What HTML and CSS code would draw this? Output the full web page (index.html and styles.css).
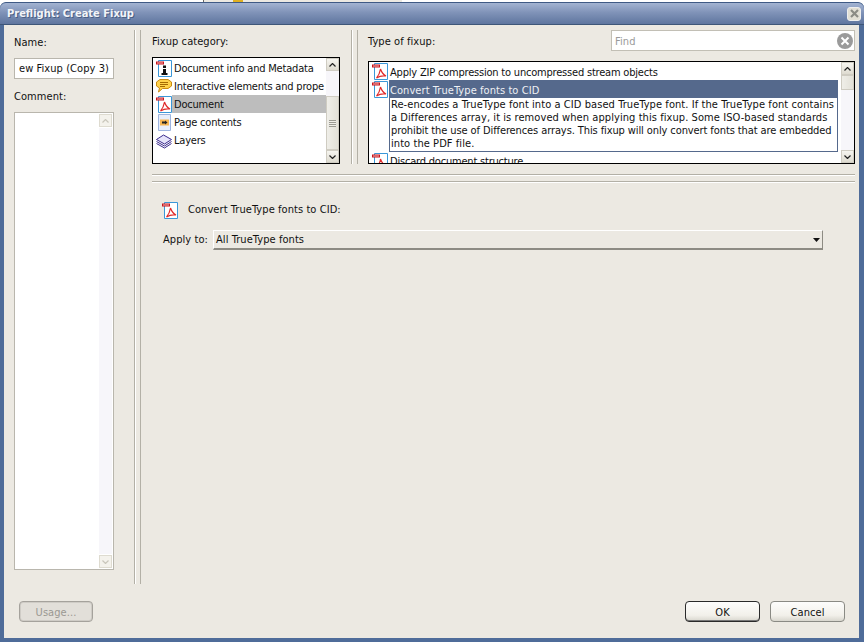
FILE: index.html
```html
<!DOCTYPE html>
<html lang="en">
<head>
<meta charset="utf-8">
<title>Preflight: Create Fixup</title>
<link rel="stylesheet" href="styles.css">
</head>
<body>
<svg class="defs" width="0" height="0" aria-hidden="true">
  <symbol id="pdf" viewBox="0 0 16 17">
    <path d="M2.5 .5H15.5V16.5H2.5Z" fill="#fff" stroke="#3a97d8"/>
    <path d="M0 1.500H8V4.500H0Z" fill="#c8141c"/>
    <path d="M1 2.500H7V3.500H1Z" fill="#f4b8b8"/>
    <path d="M8.500 6C9.500 9 11 11.500 14 13C11 12.500 7.500 13 4.500 15C6.500 12.500 8 9.500 8.500 6Z" fill="none" stroke="#e02a2a" stroke-width="1.200"/>
  </symbol>
  <symbol id="info" viewBox="0 0 16 17">
    <path d="M2.5 .5H15.5V16.5H2.5Z" fill="#fff" stroke="#3a97d8"/>
    <path d="M0 1.500H8V4.500H0Z" fill="#c8141c"/>
    <path d="M1 2.500H7V3.500H1Z" fill="#f4b8b8"/>
    <path d="M7 5.500H10V8H7ZM7 9H10V13H11.500V15H5.500V13H7Z" fill="#111"/>
  </symbol>
  <symbol id="bubble" viewBox="0 0 16 17">
    <path d="M4 1.500H12L15.500 4V8L12 10.500H6.500L2.500 14L3.500 10L.5 8V4Z" fill="#ffd24a" stroke="#c98a10"/>
    <path d="M4 4.500H12M4 6.500H12M4 8.500H9" stroke="#a56a00"/>
  </symbol>
  <symbol id="page" viewBox="0 0 16 17">
    <path d="M2.500 .5H14.500V16.500H2.500Z" fill="#e8eefa" stroke="#9db4df"/>
    <path d="M4 5.500H13V11.500H4Z" fill="#f6b552"/>
    <path d="M6 7.500H9V6.500L11.500 8.500L9 10.500V9.500H6Z" fill="#222"/>
  </symbol>
  <symbol id="layers" viewBox="0 0 16 17">
    <path d="M.5 7.500L7.500 3L15.500 7.500L8.500 12Z" fill="#e6e4fa" stroke="#3a2a8c"/>
    <path d="M.5 9.500L8.500 14L15.500 9.500M.5 11.500L8.500 16L15.500 11.500" fill="none" stroke="#3a2a8c"/>
  </symbol>
</svg>

<div class="backdrop">
  <span class="back-white"></span>
  <span class="back-grey"><i class="back-mark"></i></span>
</div>

<main class="dialog">
  <header class="titlebar">
    <h1 class="title">Preflight: Create Fixup</h1>
    <button class="close" type="button" aria-label="Close">
      <svg width="9" height="9" viewBox="0 0 9 9"><path d="M1 1L8 8M8 1L1 8" stroke="#8b8b84" stroke-width="2.200"/></svg>
    </button>
  </header>

  <div class="panel">
    <div class="workspace">
      <section class="left">
        <label class="label name-label">Name:</label>
        <div class="name-input">ew Fixup (Copy 3)</div>
        <label class="label comment-label">Comment:</label>
        <div class="comment">
          <div class="comment-fill"></div>
          <div class="scroll pale">
            <span class="sb-btn"><svg width="7" height="4" viewBox="0 0 7 4"><path d="M.5 3.500L3.500 .5L6.500 3.500" fill="none" stroke="#c9c6bb" stroke-width="1.200"/></svg></span>
            <span class="sb-track"></span>
            <span class="sb-btn"><svg width="7" height="4" viewBox="0 0 7 4"><path d="M.5 .5L3.500 3.500L6.500 .5" fill="none" stroke="#c9c6bb" stroke-width="1.200"/></svg></span>
          </div>
        </div>
      </section>

      <div class="vdiv tall"></div>

      <section class="right">
        <div class="top-row">
          <div class="category">
            <label class="label cat-label">Fixup category:</label>
            <div class="listbox cat-list">
              <ul class="rows">
                <li class="cat-row"><svg class="ico"><use href="#info"/></svg><span class="cat-text">Document info and Metadata</span></li>
                <li class="cat-row"><svg class="ico"><use href="#bubble"/></svg><span class="cat-text">Interactive elements and prope</span></li>
                <li class="cat-row"><svg class="ico"><use href="#pdf"/></svg><span class="cat-text picked">Document</span></li>
                <li class="cat-row"><svg class="ico"><use href="#page"/></svg><span class="cat-text">Page contents</span></li>
                <li class="cat-row"><svg class="ico"><use href="#layers"/></svg><span class="cat-text">Layers</span></li>
              </ul>
              <div class="scroll">
                <span class="sb-btn"><svg width="7" height="4" viewBox="0 0 7 4"><path d="M.5 3.500L3.500 .5L6.500 3.500" fill="none" stroke="#222" stroke-width="1.200"/></svg></span>
                <span class="sb-track cat-before"></span>
                <span class="sb-thumb cat-thumb"><i class="grip"></i></span>
                <span class="sb-btn"><svg width="7" height="4" viewBox="0 0 7 4"><path d="M.5 .5L3.500 3.500L6.500 .5" fill="none" stroke="#222" stroke-width="1.200"/></svg></span>
              </div>
            </div>
          </div>

          <div class="vdiv short"></div>

          <div class="types">
            <div class="types-head">
              <label class="label type-label">Type of fixup:</label>
              <div class="find">
                <span class="find-text">Find</span>
                <span class="find-clear">
                  <svg width="16" height="16" viewBox="0 0 16 16"><circle cx="8" cy="8" r="8" fill="#9a9a9a"/><path d="M4.500 4.500L11.500 11.500M11.500 4.500L4.500 11.500" stroke="#fff" stroke-width="2"/></svg>
                </span>
              </div>
            </div>
            <div class="listbox type-list">
              <div class="rows type-rows">
                <div class="type-row"><svg class="ico"><use href="#pdf"/></svg><span class="type-text tight">Apply ZIP compression to uncompressed stream objects</span></div>
                <div class="type-row"><svg class="ico"><use href="#pdf"/></svg><span class="type-text selected">Convert TrueType fonts to CID</span></div>
                <p class="desc"><span class="desc-line">Re-encodes a TrueType font into a CID based TrueType font. If the TrueType font contains</span><span class="desc-line">a Differences array, it is removed when applying this fixup. Some ISO-based standards</span><span class="desc-line squeezed">prohibit the use of Differences arrays. This fixup will only convert fonts that are embedded</span><span class="desc-line">into the PDF file.</span></p>
                <div class="type-row"><svg class="ico"><use href="#pdf"/></svg><span class="type-text tight">Discard document structure</span></div>
              </div>
              <div class="scroll">
                <span class="sb-btn"><svg width="7" height="4" viewBox="0 0 7 4"><path d="M.5 3.500L3.500 .5L6.500 3.500" fill="none" stroke="#222" stroke-width="1.200"/></svg></span>
                <span class="sb-thumb type-thumb"></span>
                <span class="sb-track"></span>
                <span class="sb-btn"><svg width="7" height="4" viewBox="0 0 7 4"><path d="M.5 .5L3.500 3.500L6.500 .5" fill="none" stroke="#222" stroke-width="1.200"/></svg></span>
              </div>
            </div>
          </div>
        </div>

        <div class="hrule first"></div>
        <div class="hrule second"></div>

        <div class="form">
          <div class="form-head">
            <svg class="ico"><use href="#pdf"/></svg>
            <span class="form-title">Convert TrueType fonts to CID:</span>
          </div>
          <div class="form-row">
            <label class="label apply-label">Apply to:</label>
            <div class="select">
              <span>All TrueType fonts</span>
              <svg width="7" height="4" viewBox="0 0 7 4"><path d="M0 0H7L3.500 4Z" fill="#111"/></svg>
            </div>
          </div>
        </div>
      </section>
    </div>

    <footer class="footer">
      <button class="btn disabled" type="button">Usage...</button>
      <div class="actions">
        <button class="btn primary" type="button">OK</button>
        <button class="btn" type="button">Cancel</button>
      </div>
    </footer>
  </div>
</main>
</body>
</html>
```

FILE: styles.css
```css
* { box-sizing: border-box; }
html, body { margin: 0; padding: 0; height: 642px; overflow: hidden; background: #fff; }
body {
  font-family: "DejaVu Sans Condensed", "DejaVu Sans", sans-serif;
  font-stretch: condensed;
  font-size: 11px;
  letter-spacing: 0.07px;
  color: #111;
  width: 864px;
}
.defs { position: absolute; }
button { font: inherit; letter-spacing: inherit; color: inherit; padding: 0; margin: 0; }
h1, p, ul { margin: 0; padding: 0; list-style: none; }

.backdrop { height: 2px; display: flex; background: #fff; }
.back-white { width: 203px; }
.back-grey { width: 199px; background: #ece9e2; border-left: 1px solid #666; padding-left: 29px; }
.back-mark { display: block; width: 10px; height: 2px; background: #e0b020; }

.dialog {
  height: 640px;
  display: flex;
  flex-direction: column;
  background: #4f6c99;
  border-radius: 6px 6px 0 0;
  border-top: 1px solid #3f5a85;
  padding: 0 5px 4px 4px;
}
.titlebar {
  height: 22px;
  margin: 0 -5px 0 -4px;
  padding: 0 3px 0 7px;
  border-bottom: 1px solid #3e5678;
  border-radius: 6px 6px 0 0;
  background: linear-gradient(#a3b4d2, #8093b8 45%, #5f769f);
  display: flex;
  align-items: center;
  justify-content: space-between;
}
.title {
  font-size: 11px;
  font-weight: bold;
  letter-spacing: 0;
  color: #f2f4f8;
  text-shadow: 1px 1px 0 #4a5f85;
}
.close {
  width: 14px;
  height: 14px;
  border: 1px solid #eee;
  border-radius: 3px;
  background: #e2dfd4;
  display: flex;
  align-items: center;
  justify-content: center;
}

.panel {
  flex: 1;
  background: #ece9e2;
  display: flex;
  flex-direction: column;
  min-height: 0;
}
.workspace { display: flex; height: 559px; padding-top: 5px; }

.label { display: block; line-height: 13px; }

.left { width: 130px; padding-left: 10px; flex: none; }
.name-label { margin-top: 6px; }
.name-input {
  width: 100px;
  height: 21px;
  margin-top: 9px;
  border: 1px solid #b9b6ad;
  background: #fff;
  padding-left: 4px;
  line-height: 19px;
  white-space: nowrap;
  overflow: hidden;
}
.comment-label { margin-top: 11px; }
.comment {
  width: 100px;
  height: 458px;
  margin-top: 9px;
  border: 1px solid #b9b6ad;
  background: #fff;
  display: flex;
  padding: 1px;
}
.comment-fill { flex: 1; }

.scroll { width: 13px; flex: none; display: flex; flex-direction: column; }
.sb-btn {
  height: 13px;
  flex: none;
  background: linear-gradient(#f6f5f0, #dedbd0);
  border: 1px solid #cfccc2;
  display: flex;
  align-items: center;
  justify-content: center;
}
.sb-track { flex: 1; background: #f7f6fa; }
.sb-thumb {
  background: linear-gradient(90deg, #efeee8, #e3e1d8);
  border: 1px solid #cfccc2;
  display: flex;
  align-items: center;
  justify-content: center;
}
.pale .sb-btn { background: #f4f2ec; border-color: #dedbd0; }
.pale .sb-track { margin: 1px 0; }
.cat-before { flex: none; height: 25px; }
.cat-thumb { flex: 1; }
.grip {
  display: block;
  width: 7px;
  height: 7px;
  background: repeating-linear-gradient(#9b9a92 0 1px, #efeee8 1px 2px);
}
.type-thumb { height: 15px; flex: none; }

.vdiv {
  width: 7px;
  flex: none;
  border-left: 1px solid #b3b0a6;
  border-right: 1px solid #b3b0a6;
  background: #ece9e2;
  box-shadow: inset 1px 0 0 #fff, inset -1px 0 0 #ece9e2;
}
.tall { height: 554px; margin-right: 11px; }
.short { height: 134px; margin: 0 10px 0 11px; }

.right { flex: 1; min-width: 0; padding-right: 4px; }
.top-row { display: flex; height: 134px; }
.category { width: 188px; flex: none; }
.cat-label { margin-top: 5px; }
.listbox {
  border: 1px solid #000;
  background: #fff;
  display: flex;
  overflow: hidden;
}
.cat-list { height: 107px; margin-top: 9px; padding: 0 0 0 1px; }
.rows { flex: 1; min-width: 0; }
.cat-row { display: flex; height: 18px; align-items: center; padding-left: 2px; }
.cat-row:first-child { margin-top: 1px; }
.ico { width: 16px; height: 17px; flex: none; }
.cat-text {
  flex: 1;
  height: 18px;
  line-height: 18px;
  padding: 1px 0 0 2px;
  letter-spacing: -0.2px;
  white-space: nowrap;
  overflow: hidden;
}
.picked { background: #bdbdbd; }

.types { width: 487px; flex: none; }
.types-head { display: flex; justify-content: space-between; height: 31px; }
.type-label { margin-top: 5px; }
.find {
  width: 244px;
  height: 21px;
  border: 1px solid #c2bfb5;
  background: #fff;
  display: flex;
  align-items: center;
  justify-content: space-between;
  padding: 0 1px 0 3px;
}
.find-text { color: #9a9a9a; padding-top: 1px; }
.find-clear { display: flex; }
.type-list { height: 103px; padding-left: 1px; }
.type-rows { padding-left: 2px; padding-right: 3px; }
.type-row { display: flex; height: 18px; align-items: center; }
.type-row:first-child { margin-top: 1px; height: 17px; }
.type-text {
  flex: 1;
  line-height: 18px;
  height: 18px;
  margin-left: 1px;
  padding: 1px 0 0 1px;
  white-space: nowrap;
}
.tight { letter-spacing: -0.2px; }
.selected { background: #55698c; color: #eef0f4; line-height: 19px; }
.desc {
  margin-left: 17px;
  height: 54px;
  border: 1px solid #55698c;
  border-top: 0;
  padding-left: 1px;
  line-height: 13px;
  white-space: nowrap;
}
.desc-line { display: block; }
.squeezed { letter-spacing: -0.1px; }

.hrule {
  background: #b3b0a6;
  border-bottom: 1px solid #fff;
  box-sizing: content-box;
  height: 1px;
}
.first { margin-top: 10px; }
.second { margin-top: 5px; }

.form { padding-left: 10px; }
.form-head { display: flex; align-items: center; margin-top: 19px; height: 17px; }
.form-title { margin-left: 10px; padding-bottom: 2px; }
.form-row { display: flex; align-items: center; margin-top: 10px; }
.apply-label { width: 51px; padding: 0 0 1px 1px; flex: none; }
.select {
  width: 610px;
  height: 20px;
  margin-top: 1px;
  border-top: 1px solid #fff;
  border-left: 1px solid #fff;
  border-bottom: 2px solid #8d8b83;
  border-right: 1px solid #8d8b83;
  display: flex;
  align-items: center;
  justify-content: space-between;
  padding: 0 2px 0 2px;
}

.footer {
  display: flex;
  justify-content: space-between;
  padding: 17px 14px 0 15px;
}
.actions { display: flex; gap: 10px; }
.btn {
  width: 75px;
  height: 21px;
  padding-top: 1px;
  border: 1px solid #8a8a84;
  border-radius: 4px;
  background: linear-gradient(#fdfdfc, #f2f0ea 70%, #d8d6ce);
  color: #111;
}
.primary { border: 1px solid #2a2a2a; box-shadow: inset 0 -1px 0 #777; }
.disabled {
  background: #e2dfd9;
  border: 1px solid #a5a29c;
  box-shadow: inset 0 0 0 1px #cfccc6;
  color: #9a9892;
  width: 74px;
}
```
